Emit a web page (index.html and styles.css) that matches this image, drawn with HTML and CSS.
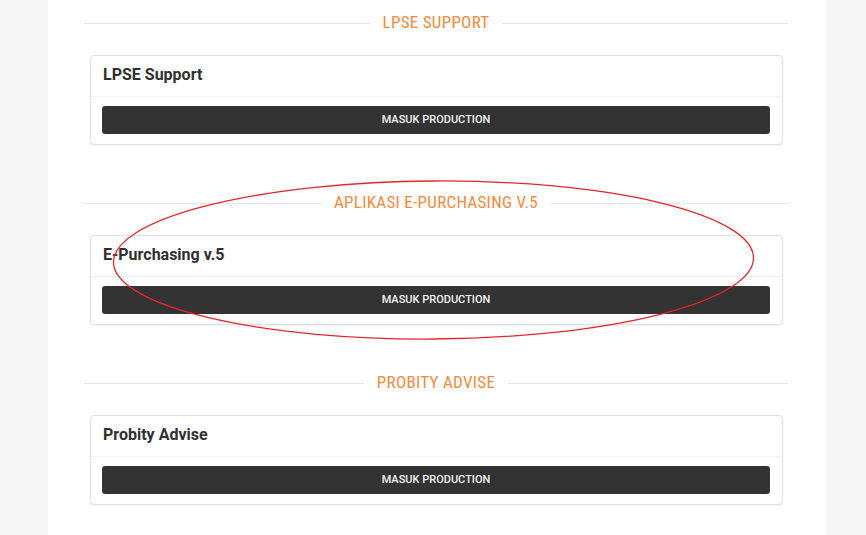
FILE: index.html
```html
<!DOCTYPE html>
<html>
<head>
<meta charset="utf-8">
<title>Aplikasi</title>
<link rel="stylesheet" href="styles.css">
</head>
<body>
<div class="page">
  <div class="content">

    <div class="section">
      <div class="section-title"><span>LPSE SUPPORT</span></div>
      <div class="card">
        <div class="card-header">LPSE Support</div>
        <div class="card-body">
          <a class="btn-prod" href="#">MASUK PRODUCTION</a>
        </div>
      </div>
    </div>

    <div class="section">
      <div class="section-title"><span>APLIKASI E-PURCHASING V.5</span></div>
      <div class="card">
        <div class="card-header">E-Purchasing v.5</div>
        <div class="card-body">
          <a class="btn-prod" href="#">MASUK PRODUCTION</a>
        </div>
      </div>
    </div>

    <div class="section">
      <div class="section-title"><span>PROBITY ADVISE</span></div>
      <div class="card">
        <div class="card-header">Probity Advise</div>
        <div class="card-body">
          <a class="btn-prod" href="#">MASUK PRODUCTION</a>
        </div>
      </div>
    </div>

  </div>

  <!-- red annotation ring drawn over the second card -->
  <svg class="mark" width="866" height="535" viewBox="0 0 866 535">
    <ellipse cx="433.5" cy="260" rx="320" ry="79" fill="none" stroke="#e3262b" stroke-width="1.3" transform="rotate(-0.4 433.5 260)"/>
  </svg>
</div>
</body>
</html>
```

FILE: styles.css
```css
html, body {
    margin: 0;
    padding: 0;
}
body {
    background: #f7f7f7;
    font-family: Roboto, "Liberation Sans", Arial, sans-serif;
    color: #333;
}
.page {
    position: relative;
    width: 866px;
    height: 535px;
    overflow: hidden;
}
.content {
    margin-left: 48px;
    width: 778px;
    height: 535px;
    background: #fff;
    box-sizing: border-box;
    padding: 12px 38px 0 36px;
}
.section {
    margin-bottom: 47px;
}
.section-title {
    display: flex;
    align-items: center;
    height: 22px;
    margin-bottom: 21px;
}
.section-title::before,
.section-title::after {
    content: "";
    flex: 1;
    border-top: 1px solid #e6e6e6;
}
.section-title span {
    padding: 0 13px;
    margin-top: -3px;
    font-family: "Roboto Condensed", "DejaVu Sans Condensed", "Liberation Sans Narrow", Roboto, sans-serif;
    font-size: 17px;
    letter-spacing: 0.3px;
    color: #f28a3d;
}
.card {
    margin: 0 5px 0 6px;
    border: 1px solid #e1e1e1;
    border-radius: 4px;
    box-shadow: 0 1px 2px rgba(0, 0, 0, 0.06);
    background: #fff;
}
.card-header {
    height: 41px;
    box-sizing: border-box;
    padding: 9px 12px 0 12px;
    border-bottom: 1px solid #f1f1f1;
    font-size: 16px;
    font-weight: bold;
    color: #2f2f2f;
}
.card-body {
    padding: 9px 12px 10px 11px;
}
.btn-prod {
    display: block;
    height: 28px;
    line-height: 28px;
    background: #333;
    border-radius: 3px;
    color: #f2f2f2;
    text-align: center;
    text-decoration: none;
    font-size: 11px;
    font-weight: 500;
}
.mark {
    position: absolute;
    left: 0;
    top: 0;
    pointer-events: none;
}
```
